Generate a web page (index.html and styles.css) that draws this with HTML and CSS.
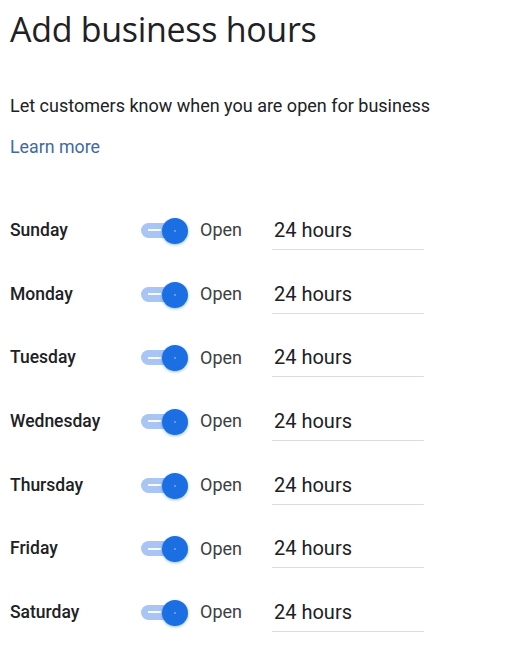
FILE: index.html
```html
<!DOCTYPE html>
<html lang="en">
<head>
<meta charset="utf-8">
<title>Add business hours</title>
<link rel="stylesheet" href="styles.css">
</head>
<body>
<main class="page">
  <h1 class="title">Add business hours</h1>
  <p class="subtitle">Let customers know when you are open for business</p>
  <a class="learn" href="#">Learn more</a>
  <div class="rows">
    <div class="row"><span class="day">Sunday</span><span class="switch"><span class="track"></span><span class="knob"></span></span><span class="state">Open</span><span class="hours">24 hours</span></div>
    <div class="row"><span class="day">Monday</span><span class="switch"><span class="track"></span><span class="knob"></span></span><span class="state">Open</span><span class="hours">24 hours</span></div>
    <div class="row"><span class="day">Tuesday</span><span class="switch"><span class="track"></span><span class="knob"></span></span><span class="state">Open</span><span class="hours">24 hours</span></div>
    <div class="row"><span class="day">Wednesday</span><span class="switch"><span class="track"></span><span class="knob"></span></span><span class="state">Open</span><span class="hours">24 hours</span></div>
    <div class="row"><span class="day">Thursday</span><span class="switch"><span class="track"></span><span class="knob"></span></span><span class="state">Open</span><span class="hours">24 hours</span></div>
    <div class="row"><span class="day">Friday</span><span class="switch"><span class="track"></span><span class="knob"></span></span><span class="state">Open</span><span class="hours">24 hours</span></div>
    <div class="row"><span class="day">Saturday</span><span class="switch"><span class="track"></span><span class="knob"></span></span><span class="state">Open</span><span class="hours">24 hours</span></div>
  </div>
</main>
</body>
</html>
```
FILE: styles.css
```css
html, body {
  margin: 0;
  padding: 0;
  background: #ffffff;
}
body {
  font-family: Roboto, "Liberation Sans", Arial, sans-serif;
  color: #202124;
}
.page {
  padding: 0 0 0 10px;
}
.title {
  margin: 0;
  padding-top: 6px;
  font-family: "Open Sans", Roboto, sans-serif;
  font-weight: 400;
  font-size: 34px;
  line-height: 46px;
  letter-spacing: -0.3px;
  color: #202124;
}
.subtitle {
  margin: 0;
  padding-top: 42px;
  font-size: 18px;
  line-height: 24px;
  color: #202124;
}
.learn {
  display: inline-block;
  margin-top: 17px;
  font-size: 17.8px;
  line-height: 24px;
  color: #4169a6;
  text-decoration: none;
}
.rows {
  display: flex;
  flex-direction: column;
  padding-top: 39px;
}
.row {
  display: flex;
  align-items: center;
  height: 63.7px;
}
.day {
  width: 131px;
  font-size: 17.5px;
  font-weight: 500;
  color: #202124;
}
.switch {
  position: relative;
  width: 46px;
  height: 26px;
  margin: 2px 13px 0 0;
}
.track {
  position: absolute;
  left: 0;
  top: 5px;
  width: 42px;
  height: 15px;
  border-radius: 8px;
  background: #a9c5f3;
}
.track::before {
  content: "";
  position: absolute;
  left: 7px;
  top: 6.5px;
  width: 13px;
  height: 2px;
  background: #ffffff;
  opacity: 0.9;
}
.knob {
  position: absolute;
  left: 21px;
  top: 0;
  width: 26px;
  height: 26px;
  border-radius: 50%;
  background: #1b6fe3;
  box-shadow: 0 1px 3px rgba(26, 115, 232, 0.45);
}
.knob::after {
  content: "";
  position: absolute;
  left: 12px;
  top: 12px;
  width: 2px;
  height: 2px;
  border-radius: 50%;
  background: #7fa9ee;
}
.state {
  width: 72px;
  font-size: 18px;
  color: #3c4043;
}
.hours {
  width: 150px;
  padding: 8px 0 7px 2px;
  font-size: 20px;
  line-height: 24px;
  color: #202124;
  border-bottom: 1px solid #dadce0;
}
```
